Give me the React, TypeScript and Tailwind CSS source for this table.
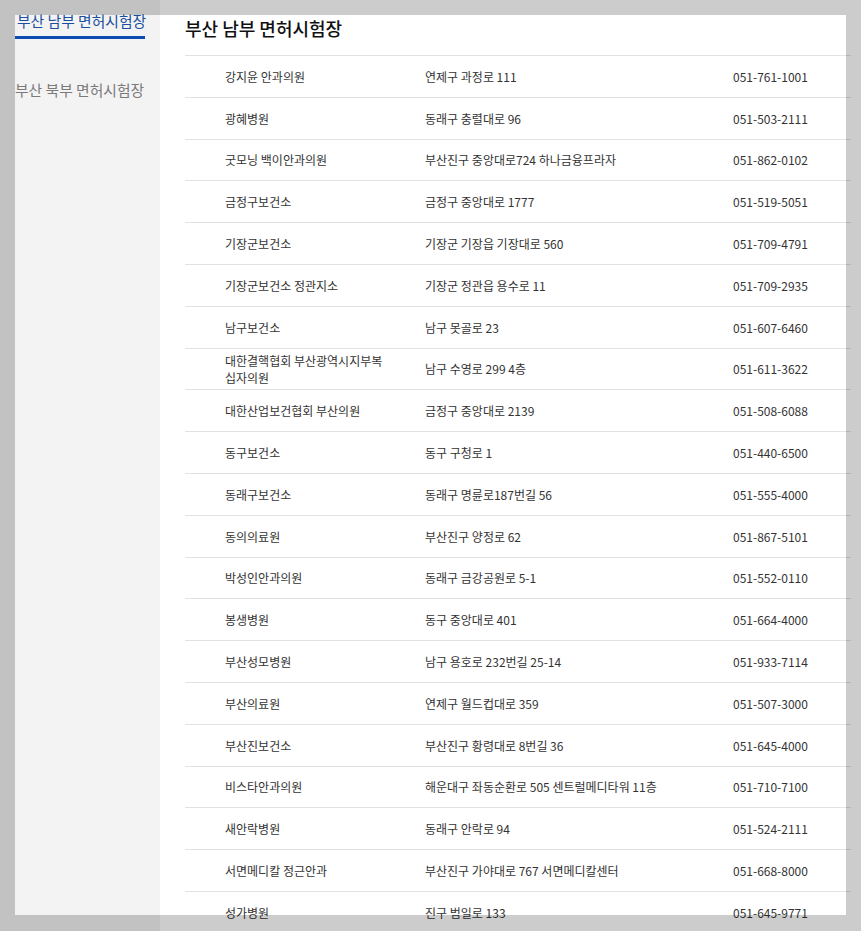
const rows: [string, string, string][] = [
  ['강지윤 안과의원', '연제구 과정로 111', '051-761-1001'],
  ['광혜병원', '동래구 충렬대로 96', '051-503-2111'],
  ['굿모닝 백이안과의원', '부산진구 중앙대로724 하나금융프라자', '051-862-0102'],
  ['금정구보건소', '금정구 중앙대로 1777', '051-519-5051'],
  ['기장군보건소', '기장군 기장읍 기장대로 560', '051-709-4791'],
  ['기장군보건소 정관지소', '기장군 정관읍 용수로 11', '051-709-2935'],
  ['남구보건소', '남구 못골로 23', '051-607-6460'],
  ['대한결핵협회 부산광역시지부복십자의원', '남구 수영로 299 4층', '051-611-3622'],
  ['대한산업보건협회 부산의원', '금정구 중앙대로 2139', '051-508-6088'],
  ['동구보건소', '동구 구청로 1', '051-440-6500'],
  ['동래구보건소', '동래구 명륜로187번길 56', '051-555-4000'],
  ['동의의료원', '부산진구 양정로 62', '051-867-5101'],
  ['박성인안과의원', '동래구 금강공원로 5-1', '051-552-0110'],
  ['봉생병원', '동구 중앙대로 401', '051-664-4000'],
  ['부산성모병원', '남구 용호로 232번길 25-14', '051-933-7114'],
  ['부산의료원', '연제구 월드컵대로 359', '051-507-3000'],
  ['부산진보건소', '부산진구 황령대로 8번길 36', '051-645-4000'],
  ['비스타안과의원', '해운대구 좌동순환로 505 센트럴메디타워 11층', '051-710-7100'],
  ['새안락병원', '동래구 안락로 94', '051-524-2111'],
  ['서면메디칼 정근안과', '부산진구 가야대로 767 서면메디칼센터', '051-668-8000'],
  ['성가병원', '진구 범일로 133', '051-645-9771'],
];

export default function App() {
  return (
    <div className="flex min-h-screen bg-white font-['Noto_Sans_CJK_KR','Noto_Sans',sans-serif]">
      {/* 왼쪽 시험장 목록 */}
      <aside className="w-[160px] shrink-0 bg-[#f3f3f3] pl-[15px] pt-[10px]">
        <div className="w-[130px] whitespace-nowrap border-b-[3px] border-[#0d4eb0] pb-[4px] pl-[2px] text-[14.8px] leading-[22px] text-[#1a4fa0]">
          부산 남부 면허시험장
        </div>
        <div className="mt-[40px] whitespace-nowrap text-[14.8px] leading-[22px] text-[#7a7a7a]">부산 북부 면허시험장</div>
      </aside>

      {/* 지정 병원 목록 */}
      <main className="flex-1 pl-[25px] pt-[14px]">
        <h2 className="mb-[13px] text-[18px] font-medium leading-[28px] text-[#111]">부산 남부 면허시험장</h2>
        <div className="w-[666px] border-t border-[#e2e2e2]">
          {rows.map(([name, addr, tel]) => (
            <div
              key={name}
              className="grid h-[41.8px] grid-cols-[240px_308px_1fr] items-center border-b border-[#e2e2e2] text-[12px] leading-[17px] text-[#333]"
            >
              <div className="pl-[40px] pr-[40px]">{name}</div>
              <div>{addr}</div>
              <div>{tel}</div>
            </div>
          ))}
        </div>
      </main>

      {/* 바깥 어두운 덮개 */}
      <div className="pointer-events-none fixed left-[15px] top-[15px] h-[900px] w-[831px] shadow-[0_0_0_2000px_rgba(0,0,0,0.2)]" />
    </div>
  );
}
